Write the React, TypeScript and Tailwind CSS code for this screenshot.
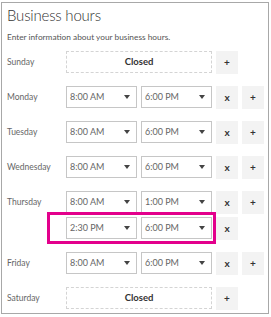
import React from 'react';

type Row = { day: string; slots: [string, string][] } | { day: string; closed: true };

const rows: Row[] = [
  { day: 'Sunday', closed: true },
  { day: 'Monday', slots: [['8:00 AM', '6:00 PM']] },
  { day: 'Tuesday', slots: [['8:00 AM', '6:00 PM']] },
  { day: 'Wednesday', slots: [['8:00 AM', '6:00 PM']] },
  { day: 'Thursday', slots: [['8:00 AM', '1:00 PM'], ['2:30 PM', '6:00 PM']] },
  { day: 'Friday', slots: [['8:00 AM', '6:00 PM']] },
  { day: 'Saturday', closed: true },
];

function TimeSelect({ value }: { value: string }) {
  return (
    <div className="w-[71px] h-[22px] border border-[#c6c6c6] bg-white flex items-center justify-between pl-[3px] pr-[6px]">
      <span className="text-[9px] text-[#666]">{value}</span>
      <svg width="6" height="4" viewBox="0 0 6 4">
        <path d="M0 0H6L3 4Z" fill="#444" />
      </svg>
    </div>
  );
}

function IconButton({ label }: { label: string }) {
  return (
    <div className="w-[22px] h-[23px] bg-[#f3f3f3] flex items-center justify-center text-[10px] font-bold text-[#333]">
      {label}
    </div>
  );
}

export default function App() {
  return (
    <div className="w-[271px] h-[317px] bg-white pt-[2px] pl-[1px]" style={{ fontFamily: 'Lato, "Liberation Sans", sans-serif' }}>
      <div className="relative w-[268px] h-[312px] border border-[#a8a8a8] pl-[5px]">
        <h1 className="text-[15px] leading-[20px] font-light tracking-[-0.2px] text-[#333] mt-[2px]">Business hours</h1>
        <p className="text-[8.3px] leading-[12px] text-[#555] mt-[6px]">Enter information about your business hours.</p>

        <div className="mt-[8px] flex flex-col">
          {rows.map((row) =>
            'closed' in row ? (
              <div key={row.day} className="flex items-center h-[22px] mb-[13px]">
                <span className="w-[59px] text-[8.5px] text-[#666]">{row.day}</span>
                <div className="w-[146px] h-[22px] border border-dashed border-[#d4d4d4] flex items-center justify-center text-[9.5px] font-bold text-[#333]">
                  Closed
                </div>
                <div className="ml-[4px]">
                  <IconButton label="+" />
                </div>
              </div>
            ) : (
              <div key={row.day} className="flex flex-col gap-[4px] mb-[13px]">
                {row.slots.map(([from, to], i) => (
                  <div key={i} className="flex items-center h-[22px]">
                    <span className="w-[59px] text-[8.5px] text-[#666]">{i === 0 ? row.day : ''}</span>
                    <div className="flex items-center gap-[4px]">
                      <TimeSelect value={from} />
                      <TimeSelect value={to} />
                      <IconButton label="x" />
                      {i === 0 && <IconButton label="+" />}
                    </div>
                  </div>
                ))}
              </div>
            )
          )}
        </div>

        {/* highlight around the added Thursday slot */}
        <div className="absolute left-[45px] top-[209px] w-[169px] h-[32px] border-[3px] border-[#e3008c]" />
      </div>
    </div>
  );
}
